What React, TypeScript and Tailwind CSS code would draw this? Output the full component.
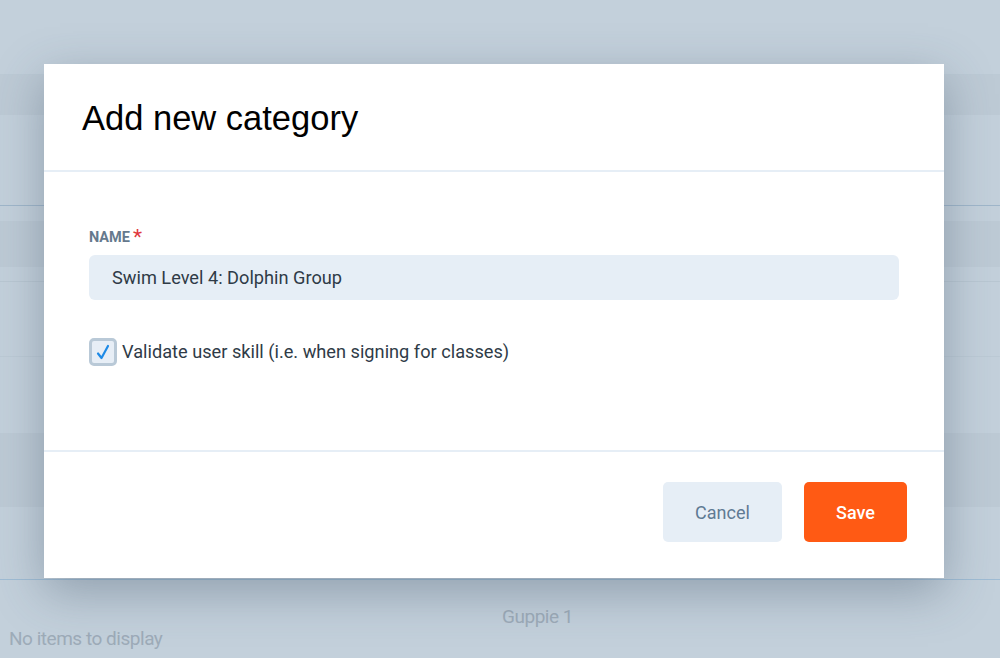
import React from 'react';

export default function App() {
  return (
    <div className="relative w-[1000px] h-[658px] overflow-hidden bg-[#c3d0db]" style={{ fontFamily: 'Roboto, "Liberation Sans", sans-serif' }}>
      {/* Background page (dimmed by overlay) */}
      <div className="flex flex-col">
        <div className="h-[75px] border-b border-[#bccad5]" />
        <div className="h-[40px] bg-[#bdcad5]" />
        <div className="h-[90px]" />
        <div className="h-px bg-[#9fb6ca]" />
        <div className="h-[15px]" />
        <div className="h-[46px] bg-[#bdcad5]" />
        <div className="h-[15px] border-b border-[#b9c7d2]" />
        <div className="h-[75px] border-b border-[#bccad5]" />
        <div className="h-[76px]" />
        <div className="h-[74px] bg-[#bdcad5]" />
        <div className="h-[72px]" />
        <div className="h-px bg-[#9fbcd4]" />
        <div className="h-[79px] pt-[25px]">
          <div className="pl-[460px] text-[19px] leading-[24px] text-[#9dabb8] tracking-tight">
            <span className="inline-block w-[155px] text-center">Guppie 1</span>
          </div>
          <div className="pl-[9px] -mt-[2px] text-[19px] leading-[24px] text-[#9dabb8] tracking-tight">No items to display</div>
        </div>
      </div>

      {/* Modal */}
      <div className="absolute left-[44px] top-[64px] w-[900px] h-[514px] bg-white flex flex-col shadow-[0_14px_45px_rgba(60,80,100,0.38)]">
        <div className="h-[108px] flex items-center px-[38px] border-b-2 border-[#e6eef6]">
          <h1 className="text-[34.5px] text-black leading-none pt-[2px]" style={{ fontFamily: '"Liberation Sans", Arial, sans-serif' }}>Add new category</h1>
        </div>

        <div className="flex-1 px-[45px] pt-[56px] border-b-2 border-[#e6eef6]">
          <div className="flex items-start h-[20px] leading-[20px]">
            <span className="text-[14.5px] font-bold text-[#65798d] uppercase">Name</span>
            <span className="text-[21px] text-[#e0393e] ml-[3px] leading-[18px]">*</span>
          </div>
          <div className="mt-[7px] h-[45px] rounded-[6px] bg-[#e6eef6] flex items-center pl-[23px] text-[18.2px] text-[#2f3b47]">
            Swim Level 4: Dolphin Group
          </div>
          <div className="mt-[38px] flex items-center gap-[5px]">
            <div className="w-[28px] h-[28px] rounded-[5px] border-[3px] border-[#b9c9d7] bg-[#e7eef6] flex items-center justify-center">
              <svg width="14" height="16" viewBox="0 0 14 16" fill="none">
                <path d="M2 9.5 L5.5 14 L12 2" stroke="#1e8ae6" strokeWidth="2.2" strokeLinecap="round" strokeLinejoin="round" />
              </svg>
            </div>
            <span className="text-[18.2px] text-[#2f3b47]">Validate user skill (i.e. when signing for classes)</span>
          </div>
        </div>

        <div className="h-[126px] flex items-start justify-end gap-[22px] pt-[30px] pr-[37px]">
          <button className="w-[119px] h-[60px] rounded-[5px] bg-[#e6eef6] text-[18px] text-[#5f7a93]">Cancel</button>
          <button className="w-[103px] h-[60px] rounded-[5px] bg-[#ff5a14] text-[18px] font-medium text-white">Save</button>
        </div>
      </div>
    </div>
  );
}
